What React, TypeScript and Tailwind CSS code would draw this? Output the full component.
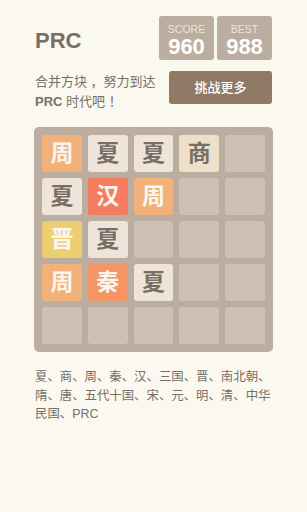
import React from 'react';

type Tile = { label: string; bg: string; fg: string } | null;

const XIA = { label: '夏', bg: 'bg-[#eee4da]', fg: 'text-[#776e65]' };
const SHANG = { label: '商', bg: 'bg-[#ede0c8]', fg: 'text-[#776e65]' };
const ZHOU = { label: '周', bg: 'bg-[#f2b179]', fg: 'text-[#f9f6f2]' };
const QIN = { label: '秦', bg: 'bg-[#f59563]', fg: 'text-[#f9f6f2]' };
const HAN = { label: '汉', bg: 'bg-[#f67c5f]', fg: 'text-[#f9f6f2]' };
const JIN = { label: '晋', bg: 'bg-[#edcf72]', fg: 'text-[#f9f6f2]' };

const board: Tile[] = [
  ZHOU, XIA, XIA, SHANG, null,
  XIA, HAN, ZHOU, null, null,
  JIN, XIA, null, null, null,
  ZHOU, QIN, XIA, null, null,
  null, null, null, null, null,
];

function ScoreBox({ label, value }: { label: string; value: number }) {
  return (
    <div className="w-[55px] h-[44px] bg-[#bbada0] rounded-[3px] flex flex-col items-center pt-[7px]">
      <span className="text-[10.5px] leading-[12px] text-[#eee4da]">{label}</span>
      <span className="text-[22px] leading-[24px] font-bold text-white">{value}</span>
    </div>
  );
}

export default function App() {
  return (
    <div
      className="w-[307px] h-[512px] bg-[#faf8ef] px-[34px] pt-[16px]"
      style={{ fontFamily: '"Liberation Sans", "Noto Sans CJK SC", sans-serif' }}
    >
      {/* header */}
      <div className="flex items-center justify-between">
        <h1 className="text-[22px] font-bold text-[#776e65] leading-none pl-[1px] pt-[6px]">PRC</h1>
        <div className="flex gap-[3px] mr-[1px]">
          <ScoreBox label="SCORE" value={960} />
          <ScoreBox label="BEST" value={988} />
        </div>
      </div>

      {/* intro + button */}
      <div className="flex items-start justify-between mt-[11px]">
        <p className="text-[13px] leading-[20px] text-[#776e65] pl-[1px] pt-[1px]">
          合并方块 ，努力到达
          <br />
          <b>PRC</b> 时代吧 ！
        </p>
        <button className="w-[103px] h-[33px] bg-[#8f7a66] rounded-[3px] text-white text-[13px] font-medium mr-[1px]">
          挑战更多
        </button>
      </div>

      {/* board */}
      <div className="mt-[15px] bg-[#bbada0] rounded-[5px] p-[8px] grid grid-cols-5 gap-[6px]">
        {board.map((t, i) => (
          <div
            key={i}
            className={`h-[37px] rounded-[3px] flex items-center justify-center text-[23px] font-semibold ${
              t ? `${t.bg} ${t.fg}` : 'bg-[#cdc1b4]'
            }`}
          >
            {t?.label}
          </div>
        ))}
      </div>

      {/* eras */}
      <p className="mt-[16px] text-[12.4px] leading-[18.5px] text-[#776e65] pl-[1px]">
        夏、商、周、秦、汉、三国、晋、南北朝、隋、唐、五代十国、宋、元、明、清、中华民国、PRC
      </p>
    </div>
  );
}
